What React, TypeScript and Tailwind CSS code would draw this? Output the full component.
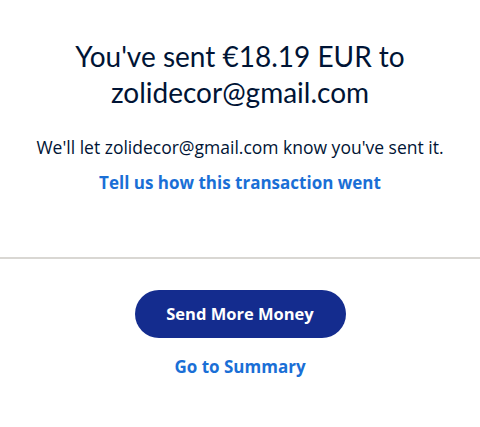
export default function App() {
  return (
    <div className="w-[480px] h-[427px] bg-white flex flex-col" style={{ fontFamily: "'Open Sans', 'Noto Sans', sans-serif" }}>
      <div className="flex flex-col items-center pt-[38px] h-[257px] text-center">
        <h1 className="text-[28px] leading-[36px] text-[#001435] font-normal px-6" style={{ fontFamily: "Lato, sans-serif" }}>
          You've sent €18.19 EUR to
          <br />
          zolidecor@gmail.com
        </h1>
        <p className="mt-[25px] text-[17.5px] leading-[24px] text-[#001435]">
          We'll let zolidecor@gmail.com know you've sent it.
        </p>
        <a className="mt-[12px] text-[17px] leading-[24px] font-bold text-[#1a6fd6]">
          Tell us how this transaction went
        </a>
      </div>
      <div className="h-[2px] bg-[#d9d7d3]" />
      <div className="flex flex-col items-center pt-[31px]">
        <button className="w-[211px] h-[48px] rounded-full bg-[#142c8e] text-white text-[16.5px] font-bold">
          Send More Money
        </button>
        <a className="mt-[17px] text-[17px] leading-[24px] font-bold text-[#1a6fd6]">Go to Summary</a>
      </div>
    </div>
  );
}
